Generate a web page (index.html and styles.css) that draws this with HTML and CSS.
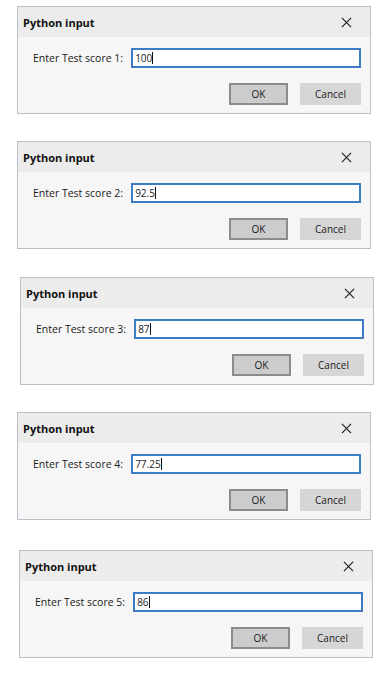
FILE: index.html
```html
<!DOCTYPE html>
<html lang="en">
<head>
  <meta charset="UTF-8">
  <meta name="viewport" content="width=device-width, initial-scale=1.0">
  <title>Python input</title>
  <link rel="stylesheet" href="styles.css">
</head>
<body>
  <main class="stack">
    <section class="dialog">
      <header class="dialog__title">
        <h2>Python input</h2>
        <svg class="dialog__close" viewBox="0 0 12 12" width="12" height="12"><path d="M1 1 L11 11 M11 1 L1 11"/></svg>
      </header>
      <div class="dialog__body">
        <label class="dialog__row">
          <span>Enter Test score 1:</span>
          <span class="field">100<i class="caret"></i></span>
        </label>
        <div class="dialog__buttons">
          <span class="btn btn--default">OK</span>
          <span class="btn">Cancel</span>
        </div>
      </div>
    </section>

    <section class="dialog">
      <header class="dialog__title">
        <h2>Python input</h2>
        <svg class="dialog__close" viewBox="0 0 12 12" width="12" height="12"><path d="M1 1 L11 11 M11 1 L1 11"/></svg>
      </header>
      <div class="dialog__body">
        <label class="dialog__row">
          <span>Enter Test score 2:</span>
          <span class="field">92.5<i class="caret"></i></span>
        </label>
        <div class="dialog__buttons">
          <span class="btn btn--default">OK</span>
          <span class="btn">Cancel</span>
        </div>
      </div>
    </section>

    <section class="dialog dialog--shift-3">
      <header class="dialog__title">
        <h2>Python input</h2>
        <svg class="dialog__close" viewBox="0 0 12 12" width="12" height="12"><path d="M1 1 L11 11 M11 1 L1 11"/></svg>
      </header>
      <div class="dialog__body">
        <label class="dialog__row">
          <span>Enter Test score 3:</span>
          <span class="field">87<i class="caret"></i></span>
        </label>
        <div class="dialog__buttons">
          <span class="btn btn--default">OK</span>
          <span class="btn">Cancel</span>
        </div>
      </div>
    </section>

    <section class="dialog">
      <header class="dialog__title">
        <h2>Python input</h2>
        <svg class="dialog__close" viewBox="0 0 12 12" width="12" height="12"><path d="M1 1 L11 11 M11 1 L1 11"/></svg>
      </header>
      <div class="dialog__body">
        <label class="dialog__row">
          <span>Enter Test score 4:</span>
          <span class="field">77.25<i class="caret"></i></span>
        </label>
        <div class="dialog__buttons">
          <span class="btn btn--default">OK</span>
          <span class="btn">Cancel</span>
        </div>
      </div>
    </section>

    <section class="dialog dialog--shift-2 dialog--gap">
      <header class="dialog__title">
        <h2>Python input</h2>
        <svg class="dialog__close" viewBox="0 0 12 12" width="12" height="12"><path d="M1 1 L11 11 M11 1 L1 11"/></svg>
      </header>
      <div class="dialog__body">
        <label class="dialog__row">
          <span>Enter Test score 5:</span>
          <span class="field">86<i class="caret"></i></span>
        </label>
        <div class="dialog__buttons">
          <span class="btn btn--default">OK</span>
          <span class="btn">Cancel</span>
        </div>
      </div>
    </section>
  </main>
</body>
</html>
```

FILE: styles.css
```css
:root {
  --text: #1a1a1a;
  --frame: #b9c0cb;
  --title-bg: #ececec;
  --body-bg: #f6f6f6;
  --field-border: #3d7bc4;
}
* {
  margin: 0;
  padding: 0;
  box-sizing: border-box;
}
body {
  background: #ffffff;
  color: var(--text);
  font-family: "Open Sans", "Noto Sans", sans-serif;
  font-size: 10.5px;
}
.stack {
  display: flex;
  flex-direction: column;
  gap: 27px;
  padding: 6px 0 0 17px;
}
.dialog {
  width: 354px;
  border: 1px solid var(--frame);
  background: var(--body-bg);
}
.dialog--shift-3 {
  margin-left: 3px;
  margin-top: 1px;
}
.dialog--shift-2 {
  margin-left: 2px;
}
.dialog--gap {
  margin-top: 3px;
}
.dialog__title {
  display: flex;
  align-items: center;
  justify-content: space-between;
  height: 30px;
  padding: 0 18px 0 5px;
  background: var(--title-bg);
}
.dialog__title h2 {
  font-size: 11px;
  font-weight: 700;
  color: #111;
}
.dialog__close {
  width: 11px;
  height: 11px;
  stroke: #222;
  stroke-width: 1.3;
  fill: none;
}
.dialog__body {
  padding: 11px 9px 8px 15px;
}
.dialog__row {
  display: flex;
  align-items: center;
  gap: 8px;
}
.field {
  flex: 1;
  display: flex;
  align-items: center;
  height: 20px;
  padding-left: 2px;
  background: #fff;
  border: 2px solid var(--field-border);
  font-size: 10px;
}
.caret {
  display: inline-block;
  width: 1px;
  height: 12px;
  background: #111;
}
.dialog__buttons {
  display: flex;
  justify-content: flex-end;
  gap: 12px;
  margin-top: 15px;
}
.btn {
  display: flex;
  align-items: center;
  justify-content: center;
  width: 61px;
  height: 22px;
  background: #d6d6d6;
  font-size: 10px;
}
.btn--default {
  width: 59px;
  background: #cccccc;
  border: 2px solid #8c8c8c;
}
```
